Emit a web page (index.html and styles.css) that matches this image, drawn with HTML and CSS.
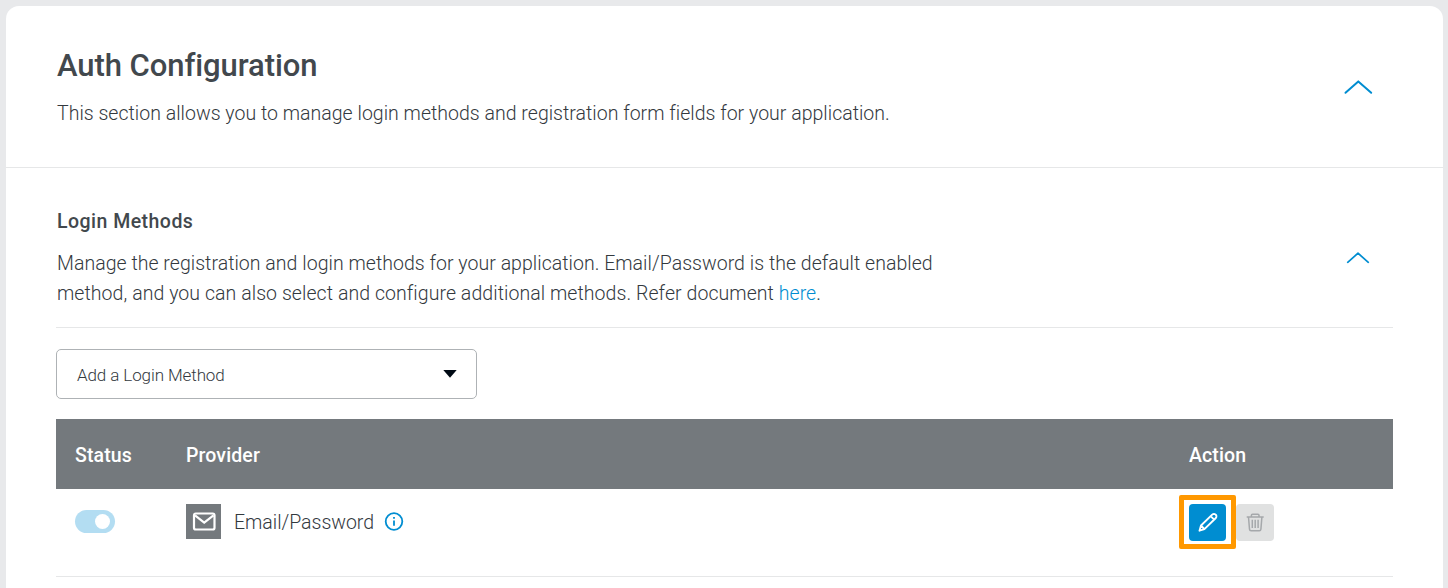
FILE: index.html
```html
<!DOCTYPE html>
<html lang="en">
<head>
<meta charset="utf-8">
<title>Auth Configuration</title>
<link rel="stylesheet" href="styles.css">
</head>
<body>
<main class="card">
  <header class="card-header">
    <div class="header-text">
      <h1 class="title"><span>Auth Configuration</span></h1>
      <p class="text intro"><span>This section allows you to manage login methods and registration form fields for your application.</span></p>
    </div>
    <svg class="chevron-large" width="30" height="16" viewBox="0 0 30 16"><path d="M2.500 13.800 15.300 2.400 28.200 13.800"/></svg>
  </header>
  <section class="methods">
    <div class="methods-header">
      <div class="header-text">
        <h2 class="subtitle"><span>Login Methods</span></h2>
        <p class="text"><span class="line-one">Manage the registration and login methods for your application. Email/Password is the default enabled</span><br><span class="line-two">method, and you can also select and configure additional methods. Refer document <a class="link">here</a>.</span></p>
      </div>
      <svg class="chevron-small" width="24" height="13" viewBox="0 0 24 13"><path d="M1.700 11.300 12 2.200 22.300 11.300"/></svg>
    </div>
    <div class="select">
      <span class="select-label">Add a Login Method</span>
      <svg width="14" height="8" viewBox="0 0 14 8"><path d="M.3 0H13.700L7 7.700Z" fill="#000914"/></svg>
    </div>
    <div class="table">
      <div class="row table-head">
        <span class="head-status">Status</span><span class="head-provider">Provider</span><span class="head-action">Action</span>
      </div>
      <div class="row table-row">
        <div><div class="toggle"><span class="knob"></span></div></div>
        <div class="provider">
          <span class="mail"><svg width="24" height="20" viewBox="0 0 24 20"><rect x="2" y="1.500" width="20.500" height="16" rx="1.800"/><path d="M3 3.300 12.200 10.600 21.500 3.300"/></svg></span>
          <span class="provider-name">Email/Password</span>
          <svg class="info" width="20" height="20" viewBox="0 0 20 20"><circle cx="10" cy="9.500" r="8.300"/><path d="M10 5V6.800M10 8.500V13.700"/></svg>
        </div>
        <div class="actions">
          <span class="button edit"><svg width="22" height="22" viewBox="0 0 22 22"><path d="M2.500 18.700 4 13.500 15.200 2.600Q16 1.900 17 1.900Q19.600 2.200 19.400 4.700Q19.300 5.600 18.600 6.200L7.400 17.100ZM13.700 4.100 17.100 7.600M4 13.500 7.400 17.100"/></svg></span>
          <span class="button delete"><svg width="20" height="20" viewBox="0 0 20 20"><path d="M1.700 4H18.700M6.400 4V2.300Q6.400 1.200 7.500 1.200H12.900Q14 1.200 14 2.300V4M3.500 4 4.500 16.200Q4.600 17.700 6.100 17.700H14.300Q15.800 17.700 15.900 16.200L16.900 4M7.300 6.800V15M10.200 6.800V15M13.100 6.800V15"/></svg></span>
        </div>
      </div>
    </div>
  </section>
</main>
</body>
</html>
```
FILE: styles.css
```css
* { box-sizing: border-box; }
body {
  margin: 0;
  padding: 6px 5px 0 6px;
  height: 588px;
  overflow: hidden;
  background: #e8e9eb;
  color: #42484d;
  font-family: Roboto, "Liberation Sans", sans-serif;
}
h1, h2, p { margin: 0; }
svg { display: block; flex: none; fill: none; }
.card { height: 582px; background: #fff; border-radius: 13px 13px 0 0; }
.card-header {
  display: flex;
  justify-content: space-between;
  height: 162px;
  padding: 40px 70px 0 51px;
  border-bottom: 1px solid #e6e7e8;
}
.header-text { white-space: nowrap; }
.title { font-size: 31px; line-height: 40px; font-weight: 500; letter-spacing: -0.07px; }
.text { font-size: 19.5px; line-height: 30px; font-weight: 300; color: #33393e; }
.intro { margin-top: 13px; letter-spacing: 0.02px; }
.line-one { letter-spacing: 0.035px; }
.line-two { letter-spacing: 0.065px; }
.chevron-large { margin-top: 33px; stroke: #008dd1; stroke-width: 2; stroke-linecap: round; stroke-linejoin: round; }
.methods { padding: 0 50px; }
.methods-header {
  display: flex;
  justify-content: space-between;
  height: 160px;
  padding: 39px 23px 0 1px;
  border-bottom: 1px solid #e6e7e8;
}
.subtitle { font-size: 19.5px; line-height: 30px; font-weight: 500; letter-spacing: 0.47px; margin-bottom: 12px; }
.chevron-small { margin-top: 44px; stroke: #008dd1; stroke-width: 1.7; stroke-linecap: round; stroke-linejoin: round; }
.link { color: #008dd1; }
.select {
  display: flex;
  align-items: center;
  justify-content: space-between;
  width: 421px;
  height: 50px;
  margin: 21px 0 20px;
  padding: 0 19px 0 20px;
  border: 1px solid #aeb2b5;
  border-radius: 5px;
  font-size: 17px;
  font-weight: 300;
}
.select-label { padding-top: 2px; letter-spacing: -0.1px; color: #33393e; }
.row { display: grid; grid-template-columns: 111px 1003px 1fr; padding-left: 19px; }
.table-head { height: 70px; align-items: center; padding-top: 2px; background: #74797d; color: #fff; font-size: 19.5px; font-weight: 500; letter-spacing: 0.12px; }
.table-row { height: 88px; padding-top: 15px; border-bottom: 1px solid #e6e7e8; }
.toggle { display: flex; align-items: center; justify-content: flex-end; width: 40px; height: 23px; margin-top: 6px; padding-right: 5px; border-radius: 12px; background: #b3ddf2; }
.knob { width: 15px; height: 15px; border-radius: 50%; background: #fff; }
.provider { display: flex; height: 35px; align-items: center; font-size: 19.5px; font-weight: 300; color: #33393e; }
.provider-name { width: 140px; padding-top: 1px; white-space: nowrap; letter-spacing: -0.02px; }
.mail { display: grid; place-items: center; width: 35px; height: 35px; margin-right: 13px; background: #74797d; }
.mail svg { stroke: #fff; stroke-width: 2.2; }
.info { margin-left: 10px; stroke: #008dd1; stroke-width: 1.8; }
.actions { display: flex; gap: 10px; }
.button { display: grid; place-items: center; width: 37px; height: 37px; border-radius: 4px; }
.edit { position: relative; background: #008dd1; }
.edit::after { content: ""; position: absolute; inset: -9px -9.5px -7.500px -10.500px; border: 5px solid #ff9800; border-radius: 2px; }
.edit svg { stroke: #fff; stroke-width: 1.9; stroke-linejoin: round; }
.delete { width: 38px; background: #e0e1e1; }
.delete svg { stroke: #a5a8ab; stroke-width: 1.5; }
```
